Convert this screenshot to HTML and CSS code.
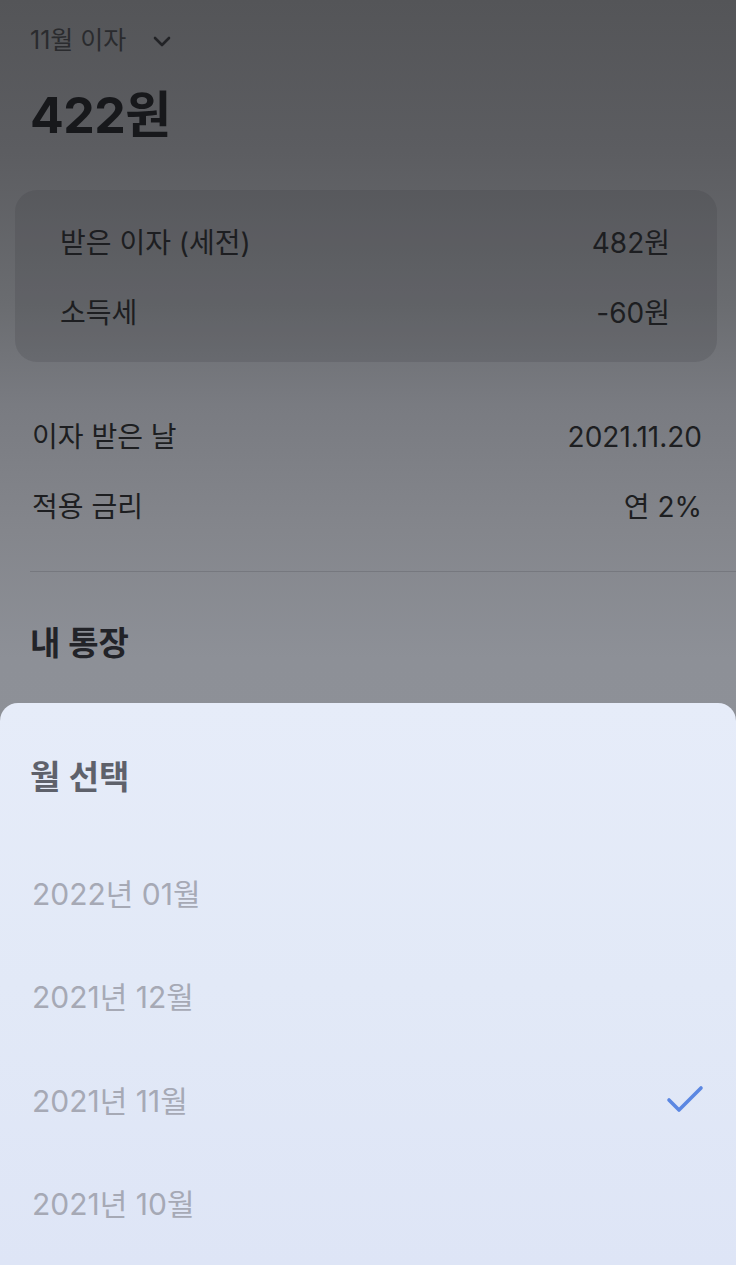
FILE: index.html
```html
<!DOCTYPE html>
<html lang="ko">
<head>
<meta charset="utf-8">
<title>11월 이자</title>
<link rel="stylesheet" href="styles.css">
</head>
<body>
<main class="page">
  <header class="head">
    <button class="month-btn">11월 이자
      <svg class="chev" width="20" height="14" viewBox="0 0 20 14"><path d="M3 4 L10 11 L17 4" fill="none" stroke="#222326" stroke-width="2.6" stroke-linecap="round" stroke-linejoin="round"/></svg>
    </button>
    <h1 class="amount">422원</h1>
  </header>

  <section class="card">
    <div class="row"><span>받은 이자 (세전)</span><span>482원</span></div>
    <div class="row"><span>소득세</span><span>-60원</span></div>
  </section>

  <section class="details">
    <div class="row"><span>이자 받은 날</span><span>2021.11.20</span></div>
    <div class="row"><span>적용 금리</span><span>연 2%</span></div>
  </section>

  <hr class="divider">

  <h2 class="section-title">내 통장</h2>
</main>

<div class="sheet">
  <h3 class="sheet-title">월 선택</h3>
  <ul class="months">
    <li class="month">2022년 01월</li>
    <li class="month">2021년 12월</li>
    <li class="month selected">2021년 11월
      <svg class="check" width="40" height="32" viewBox="0 0 40 32"><path d="M4 17 L14 27 L36 5" fill="none" stroke="#5b87e2" stroke-width="3.6" stroke-linecap="round" stroke-linejoin="round"/></svg>
    </li>
    <li class="month">2021년 10월</li>
  </ul>
</div>
</body>
</html>
```

FILE: styles.css
```css
* { box-sizing: border-box; }
html, body {
  margin: 0;
  padding: 0;
  width: 736px;
  height: 1265px;
  overflow: hidden;
}
body {
  font-family: Inter, "Noto Sans CJK KR", "Noto Sans", sans-serif;
  color: #1f2023;
  background: linear-gradient(180deg, #545558 0%, #5c5d61 12%, #6a6c70 24%, #797b81 32%, #84868c 42%, #8d9097 52%, #90939a 100%);
  position: relative;
}
.page {
  padding: 23px 0 0 0;
}
.head {
  padding: 0 30px;
}
.month-btn {
  display: flex;
  align-items: center;
  gap: 26px;
  border: 0;
  background: none;
  padding: 0;
  font: inherit;
  font-size: 25px;
  line-height: 34px;
  color: #2a2b2e;
}
.chev { margin-top: 2px; }
.amount {
  margin: 28px 0 0 0;
  font-size: 50px;
  line-height: 60px;
  font-weight: 700;
  color: #17181b;
  letter-spacing: -0.5px;
}
.card {
  margin: 45px 19px 0 15px;
  padding: 35px 47px 31px 45px;
  border-radius: 22px;
  background: rgba(55, 56, 62, 0.18);
  display: flex;
  flex-direction: column;
  gap: 34px;
}
.row {
  display: flex;
  justify-content: space-between;
  align-items: center;
  font-size: 28px;
  line-height: 36px;
  color: #1d1e21;
}
.details {
  margin: 57px 34px 0 32px;
  display: flex;
  flex-direction: column;
  gap: 34px;
}
.divider {
  margin: 46px 0 0 30px;
  border: 0;
  height: 1px;
  background: rgba(80, 82, 90, 0.3);
}
.section-title {
  margin: 51px 30px 0 30px;
  font-size: 33px;
  line-height: 40px;
  font-weight: 700;
  color: #222328;
}
.sheet {
  position: absolute;
  left: 0;
  right: 0;
  top: 703px;
  bottom: 0;
  border-radius: 18px 18px 0 0;
  background: linear-gradient(180deg, #e6ecf9 0%, #e2e9f7 50%, #dee5f6 100%);
  padding: 54px 31px 0 30px;
}
.sheet-title {
  margin: 0;
  font-size: 33px;
  line-height: 40px;
  font-weight: 600;
  color: #5e616b;
}
.months {
  list-style: none;
  margin: 43px 0 0 0;
  padding: 0;
}
.month {
  height: 103.5px;
  display: flex;
  align-items: center;
  justify-content: space-between;
  padding-left: 2px;
  font-size: 30px;
  color: #a6a9b5;
}
.check { display: block; }
```
